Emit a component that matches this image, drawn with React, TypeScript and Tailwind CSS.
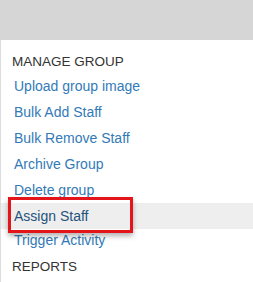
const items = [
  'Upload group image',
  'Bulk Add Staff',
  'Bulk Remove Staff',
  'Archive Group',
  'Delete group',
];

export default function App() {
  return (
    <div className="relative w-[253px] h-[282px] overflow-hidden bg-white font-['Liberation_Sans',Arial,sans-serif]">
      <div className="h-[40px] bg-[#d6d6d6]" />
      <div className="border-l border-[#dddddd] h-[242px] pt-[12px]">
        <div className="h-[21px] flex items-center pl-[11px] text-[13.5px] text-[#333333]">MANAGE GROUP</div>
        {items.map((item) => (
          <div key={item} className="h-[26px] flex items-center pl-[13px] text-[14px] text-[#337ab7]">
            {item}
          </div>
        ))}
        <div className="h-[26px] flex items-center pl-[13px] text-[14px] text-[#23527c] bg-[#eeeeee]">Assign Staff</div>
        <div className="h-[22px] flex items-center pl-[13px] text-[14px] text-[#337ab7]">Trigger Activity</div>
        <div className="h-[32px] flex items-center pl-[11px] text-[13.5px] text-[#333333]">REPORTS</div>
      </div>
      <div className="absolute left-[8px] top-[197px] w-[125px] h-[36px] border-[3px] border-[#e3151a] shadow-[0_3px_5px_rgba(0,0,0,0.3)]" />
    </div>
  );
}
